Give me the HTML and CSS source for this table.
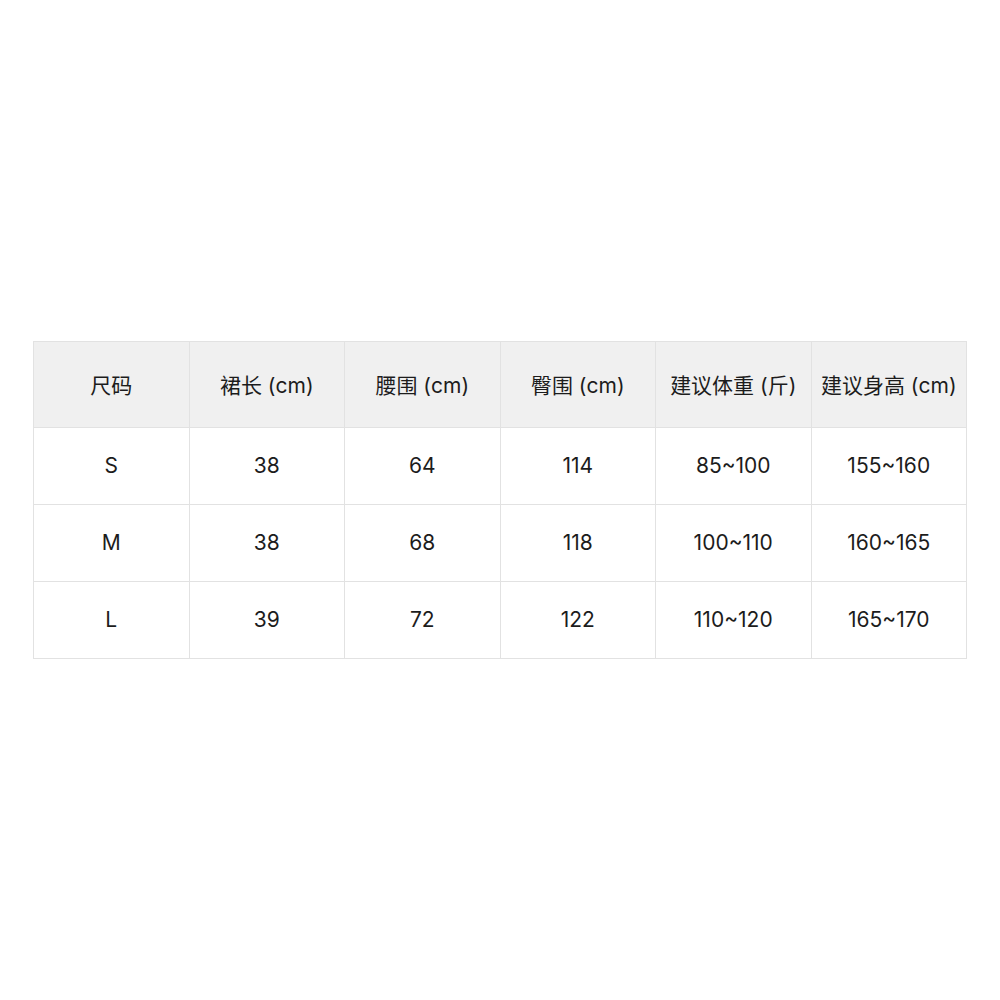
FILE: index.html
```html
<!DOCTYPE html>
<html lang="zh-CN">
<head>
<meta charset="utf-8">
<title>尺码表</title>
<link rel="stylesheet" href="styles.css">
</head>
<body>
<main class="page">
  <table class="size-table">
    <thead>
      <tr>
        <th>尺码</th>
        <th>裙长 (cm)</th>
        <th>腰围 (cm)</th>
        <th>臀围 (cm)</th>
        <th>建议体重 (斤)</th>
        <th>建议身高 (cm)</th>
      </tr>
    </thead>
    <tbody>
      <tr><td>S</td><td>38</td><td>64</td><td>114</td><td>85~100</td><td>155~160</td></tr>
      <tr><td>M</td><td>38</td><td>68</td><td>118</td><td>100~110</td><td>160~165</td></tr>
      <tr><td>L</td><td>39</td><td>72</td><td>122</td><td>110~120</td><td>165~170</td></tr>
    </tbody>
  </table>
</main>
</body>
</html>
```
FILE: styles.css
```css
html, body {
  margin: 0;
  padding: 0;
  background: #ffffff;
}
.page {
  padding: 341px 33px 0 33px;
}
.size-table {
  width: 934px;
  border-collapse: collapse;
  table-layout: fixed;
  font-family: Inter, "Noto Sans CJK SC", sans-serif;
  font-size: 21px;
  color: #1c1c1c;
}
.size-table th,
.size-table td {
  border: 1px solid #e2e2e2;
  text-align: center;
  vertical-align: middle;
  padding: 0;
  font-weight: 400;
}
.size-table th {
  background: #f0f0f0;
  height: 83px;
  padding-bottom: 2px;
  white-space: nowrap;
}
.size-table td {
  height: 74px;
  padding-bottom: 2px;
}
```
